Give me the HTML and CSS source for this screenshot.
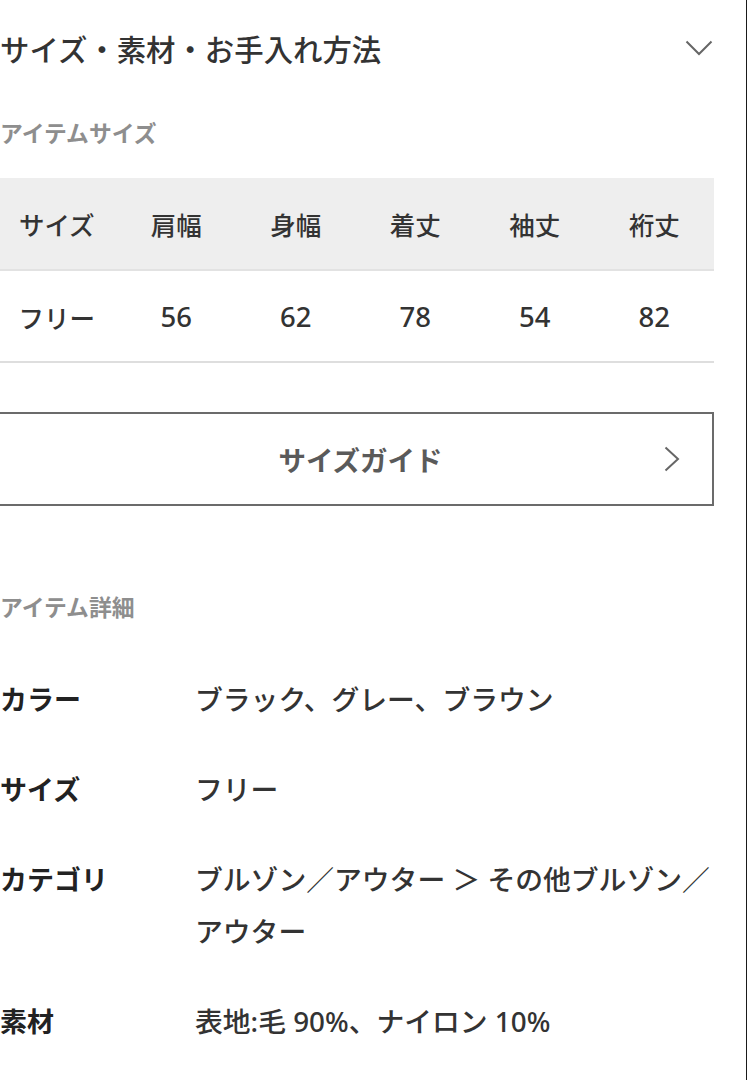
FILE: index.html
```html
<!DOCTYPE html>
<html lang="ja">
<head>
<meta charset="utf-8">
<title>サイズ・素材・お手入れ方法</title>
<link rel="stylesheet" href="styles.css">
</head>
<body>
<div class="page">
  <div class="acc-head">
    <h2 class="acc-title">サイズ・素材・お手入れ方法</h2>
    <svg class="chev-down" width="28" height="16" viewBox="0 0 28 16"><path d="M1.5 1.5 L14 14 L26.5 1.5" fill="none" stroke="#666" stroke-width="2"/></svg>
  </div>

  <h3 class="sec-head sec-size">アイテムサイズ</h3>

  <table class="size-table">
    <thead>
      <tr><th>サイズ</th><th>肩幅</th><th>身幅</th><th>着丈</th><th>袖丈</th><th>裄丈</th></tr>
    </thead>
    <tbody>
      <tr><td class="size-name">フリー</td><td>56</td><td>62</td><td>78</td><td>54</td><td>82</td></tr>
    </tbody>
  </table>

  <a class="guide-btn" href="#">
    <span class="guide-spacer"></span>
    <span class="guide-text">サイズガイド</span>
    <svg class="chev-right" width="16" height="26" viewBox="0 0 16 26"><path d="M1.5 1.5 L14 13 L1.5 24.5" fill="none" stroke="#666" stroke-width="2"/></svg>
  </a>

  <h3 class="sec-head sec-detail">アイテム詳細</h3>

  <dl class="details">
    <dt>カラー</dt><dd>ブラック、グレー、ブラウン</dd>
    <dt>サイズ</dt><dd>フリー</dd>
    <dt>カテゴリ</dt><dd>ブルゾン／アウター ＞ その他ブルゾン／アウター</dd>
    <dt>素材</dt><dd>表地:毛 90%、ナイロン 10%</dd>
  </dl>
</div>
</body>
</html>
```

FILE: styles.css
```css
* { box-sizing: border-box; }

html, body {
  margin: 0;
  padding: 0;
  background: #fff;
}

body {
  font-family: "Noto Sans CJK JP", "Noto Sans", sans-serif;
  color: #333;
}

.page {
  width: 747px;
  min-height: 1080px;
  padding: 28px 33px 0 0;
  border-right: 1px solid #1a1a1a;
}

.acc-head {
  display: flex;
  align-items: center;
  justify-content: space-between;
  height: 40px;
}

.acc-title {
  margin: 0;
  font-size: 29.4px;
  font-weight: 500;
  line-height: 40px;
  color: #333;
}

.sec-head {
  margin: 0;
  font-size: 22.8px;
  font-weight: 700;
  line-height: 32px;
  color: #8e8e8e;
}

.sec-size {
  margin-top: 49px;
}

.size-table {
  margin-top: 29px;
  margin-left: -3px;
  width: 717px;
  border-collapse: collapse;
  table-layout: fixed;
}

.size-table th,
.size-table td {
  height: 92px;
  padding: 0;
  text-align: center;
  font-size: 25.5px;
  font-weight: 500;
  color: #333;
}

.size-table thead tr {
  background: #eeeeee;
  border-bottom: 2px solid #e2e2e2;
}

.size-table tbody tr {
  border-bottom: 2px solid #dedede;
}

.size-table td {
  font-family: "Noto Sans", "Noto Sans CJK JP", sans-serif;
  font-size: 27.5px;
  font-weight: 500;
}

.size-table td.size-name {
  font-family: "Noto Sans CJK JP", sans-serif;
  font-size: 25.5px;
}

.guide-btn {
  display: grid;
  grid-template-columns: 1fr auto 1fr;
  align-items: center;
  margin-top: 49px;
  margin-left: -3px;
  width: 717px;
  height: 94px;
  border: 2px solid #6b6b6b;
  text-decoration: none;
  padding: 0 32px 0 42px;
}

.guide-text {
  font-size: 27.5px;
  font-weight: 700;
  color: #5a5a5a;
}

.chev-right {
  justify-self: end;
}

.sec-detail {
  margin-top: 85px;
}

.details {
  display: grid;
  grid-template-columns: 195px 1fr;
  row-gap: 38px;
  margin: 50px 0 0 0;
}

.details dt {
  font-size: 27px;
  font-weight: 700;
  line-height: 52px;
  color: #222;
}

.details dd {
  margin: 0;
  font-family: "Noto Sans", "Noto Sans CJK JP", sans-serif;
  font-size: 27.8px;
  font-weight: 500;
  line-height: 52px;
  color: #333;
}
```
